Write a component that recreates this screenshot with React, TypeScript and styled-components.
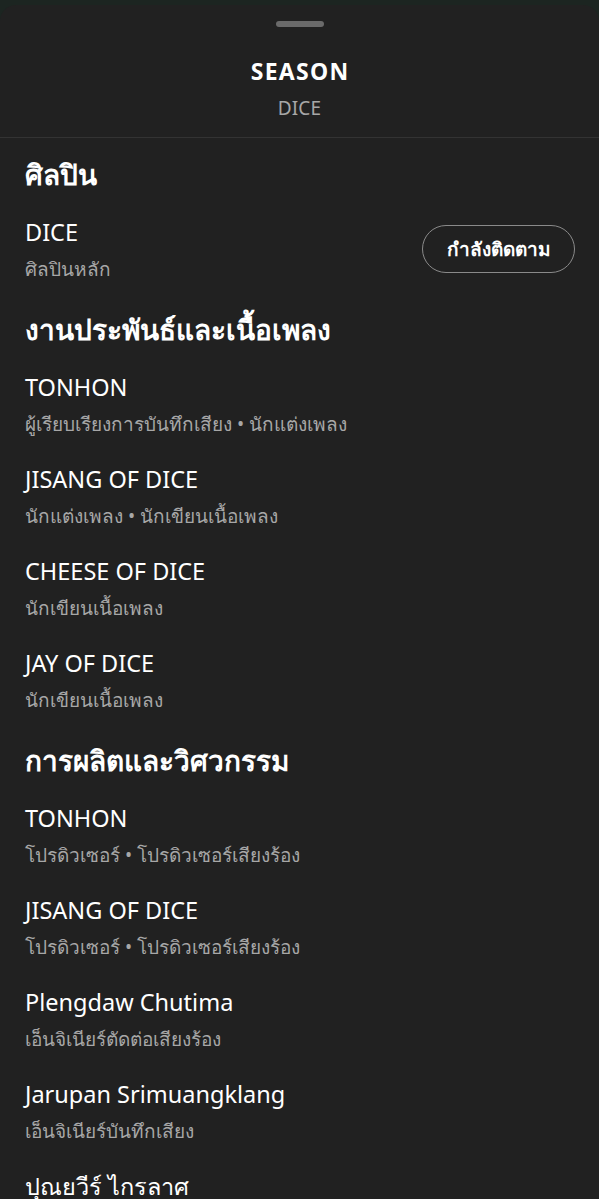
import React from "react";
import styled, { createGlobalStyle } from "styled-components";

const Global = createGlobalStyle`
  html, body { margin: 0; padding: 0; background: #1c2521; }
  body { font-family: "Noto Sans", "Open Sans", sans-serif; -webkit-font-smoothing: antialiased; }
`;

const Page = styled.div`
  width: 599px;
  height: 1199px;
  overflow: hidden;
  background: #1c2521;
  padding-top: 5px;
  box-sizing: border-box;
`;

const Sheet = styled.div`
  background: #212121;
  border-radius: 16px 16px 0 0;
  height: 100%;
  color: #ffffff;
`;

const Header = styled.header`
  display: flex;
  flex-direction: column;
  align-items: center;
  padding-top: 16px;
  height: 133px;
  box-sizing: border-box;
  border-bottom: 1px solid #333333;
`;

const Handle = styled.div`
  width: 48px;
  height: 6px;
  border-radius: 3px;
  background: #6a6a6a;
`;

const Title = styled.div`
  margin-top: 29px;
  font-size: 23px;
  font-weight: 700;
  line-height: 30px;
  letter-spacing: 1.3px;
  padding-left: 1.3px;
`;

const Subtitle = styled.div`
  margin-top: 10px;
  font-size: 19px;
  line-height: 24px;
  color: #a7a7a7;
  letter-spacing: 0.2px;
`;

const Content = styled.main`
  padding: 16px 25px 0;
  display: flex;
  flex-direction: column;
  gap: 21px;
`;

const SectionTitle = styled.h2<{ $first?: boolean }>`
  margin: ${(p) => (p.$first ? "0" : "2px")} 0 0;
  font-size: 28px;
  font-weight: 700;
  line-height: 40px;
  height: 40px;
`;

const Row = styled.div`
  display: flex;
  align-items: center;
  justify-content: space-between;
  height: 71px;
`;

const Texts = styled.div`
  display: flex;
  flex-direction: column;
`;

const Name = styled.div`
  font-size: 23.5px;
  line-height: 34px;
  height: 34px;
  color: #ffffff;
  white-space: nowrap;
`;

const Role = styled.div`
  font-size: 19px;
  line-height: 34px;
  height: 34px;
  color: #a7a7a7;
  margin-top: 3px;
  white-space: nowrap;
`;

const FollowButton = styled.button`
  height: 48px;
  width: 153px;
  padding: 0;
  border-radius: 24px;
  border: 1px solid #8a8a8a;
  background: transparent;
  color: #ffffff;
  font-family: inherit;
  font-size: 19px;
  font-weight: 700;
  margin-right: -1px;
  margin-top: -3px;
`;

type Person = { name: string; role: string };

const writers: Person[] = [
  { name: "TONHON", role: "ผู้เรียบเรียงการบันทึกเสียง • นักแต่งเพลง" },
  { name: "JISANG OF DICE", role: "นักแต่งเพลง • นักเขียนเนื้อเพลง" },
  { name: "CHEESE OF DICE", role: "นักเขียนเนื้อเพลง" },
  { name: "JAY OF DICE", role: "นักเขียนเนื้อเพลง" },
];

const producers: Person[] = [
  { name: "TONHON", role: "โปรดิวเซอร์ • โปรดิวเซอร์เสียงร้อง" },
  { name: "JISANG OF DICE", role: "โปรดิวเซอร์ • โปรดิวเซอร์เสียงร้อง" },
  { name: "Plengdaw Chutima", role: "เอ็นจิเนียร์ตัดต่อเสียงร้อง" },
  { name: "Jarupan Srimuangklang", role: "เอ็นจิเนียร์บันทึกเสียง" },
  { name: "ปุณยวีร์ ไกรลาศ", role: "เอ็นจิเนียร์" },
];

const PersonRow = ({ p }: { p: Person }) => (
  <Row>
    <Texts>
      <Name>{p.name}</Name>
      <Role>{p.role}</Role>
    </Texts>
  </Row>
);

export default function App() {
  return (
    <>
      <Global />
      <Page>
        <Sheet>
          <Header>
            <Handle />
            <Title>SEASON</Title>
            <Subtitle>DICE</Subtitle>
          </Header>
          <Content>
            <SectionTitle $first>ศิลปิน</SectionTitle>
            <Row>
              <Texts>
                <Name>DICE</Name>
                <Role>ศิลปินหลัก</Role>
              </Texts>
              <FollowButton>กำลังติดตาม</FollowButton>
            </Row>
            <SectionTitle>งานประพันธ์และเนื้อเพลง</SectionTitle>
            {writers.map((p, i) => (
              <PersonRow key={"w" + i} p={p} />
            ))}
            <SectionTitle>การผลิตและวิศวกรรม</SectionTitle>
            {producers.map((p, i) => (
              <PersonRow key={"p" + i} p={p} />
            ))}
          </Content>
        </Sheet>
      </Page>
    </>
  );
}
